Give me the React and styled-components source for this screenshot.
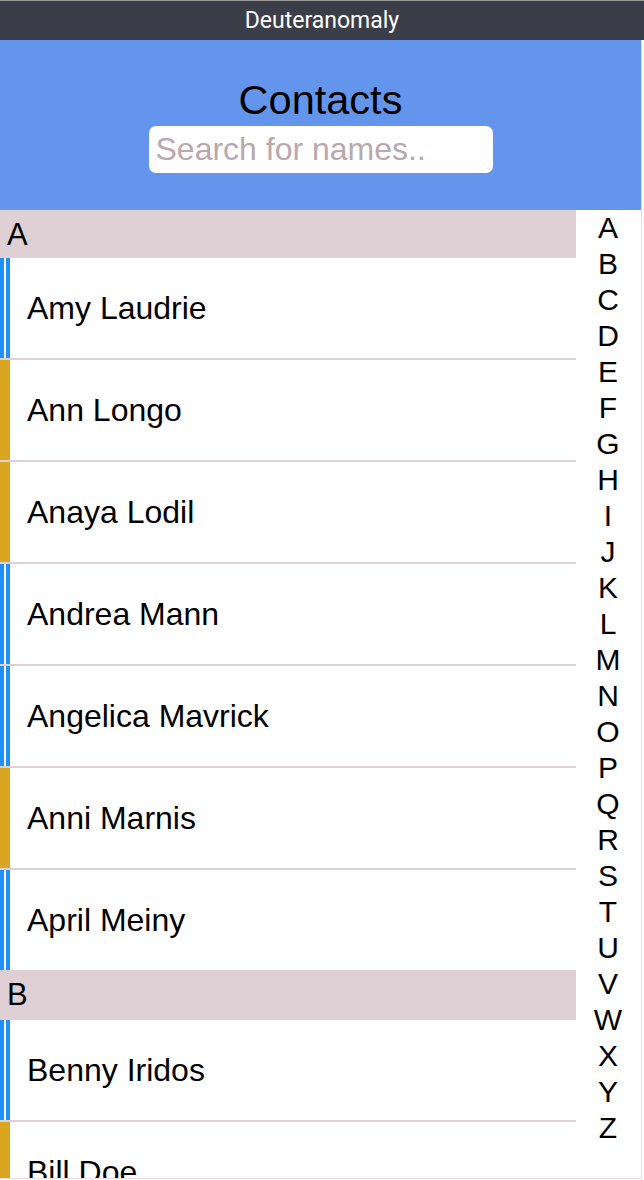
import React from 'react';
import styled, { createGlobalStyle } from 'styled-components';

const GlobalStyle = createGlobalStyle`
  body {
    margin: 0;
    background: #fff;
    font-family: "Liberation Sans", Arial, sans-serif;
  }
`;

const Page = styled.div`
  width: 644px;
  height: 1180px;
  display: flex;
  flex-direction: column;
  overflow: hidden;
`;

const TitleBar = styled.div`
  height: 39px;
  border-top: 1px solid #9c9c9c;
  background: #3b3e48;
  color: #fff;
  font-family: Roboto, "Noto Sans", sans-serif;
  font-size: 23px;
  display: flex;
  align-items: center;
  justify-content: center;
`;

const Shell = styled.div`
  box-sizing: border-box;
  width: 642px;
  height: 1139px;
  border-right: 1px solid #eddde3;
  border-bottom: 1px solid #eddde3;
  display: flex;
  flex-direction: column;
  overflow: hidden;
`;

const Header = styled.header`
  height: 170px;
  flex-shrink: 0;
  background: #6495ed;
  display: flex;
  flex-direction: column;
  align-items: center;
  padding-top: 38px;
  box-sizing: border-box;
`;

const Title = styled.h1`
  margin: 0;
  font-size: 41.5px;
  line-height: 44px;
  font-weight: normal;
  color: #000;
`;

const Search = styled.input`
  margin-top: 4px;
  box-sizing: border-box;
  width: 344px;
  height: 47px;
  border: none;
  border-radius: 7px;
  padding: 0 7px;
  font-family: "Liberation Sans", Arial, sans-serif;
  font-size: 32px;
  outline: none;
  &::placeholder {
    color: #b9a8ae;
  }
`;

const Body = styled.div`
  flex: 1;
  display: flex;
  min-height: 0;
`;

const List = styled.div`
  width: 576px;
  overflow: hidden;
`;

const SectionHead = styled.div`
  height: ${p => p.$height}px;
  box-sizing: border-box;
  padding: 7px 0 0 7px;
  background: #dfd0d5;
  font-size: 31px;
  color: #000;
`;

const Row = styled.div`
  height: 100px;
  display: flex;
  align-items: center;
  border-bottom: ${p => (p.$last ? 'none' : '2px solid #dfd0d5')};
`;

const Stripe = styled.div`
  width: 10px;
  align-self: stretch;
  flex-shrink: 0;
  background: ${p => (p.$kind === 'gold'
    ? '#daa520'
    : 'linear-gradient(to right, #1e90ff 0 4px, #fff 4px 6px, #1e90ff 6px 10px)')};
`;

const Name = styled.span`
  margin-left: 17px;
  font-size: 32px;
  color: #000;
`;

const Index = styled.div`
  width: 64px;
  display: flex;
  flex-direction: column;
  align-items: center;
  font-size: 30px;
  line-height: 36px;
  color: #000;
`;

const sections = [
  {
    letter: 'A',
    height: 48,
    people: [
      ['Amy Laudrie', 'blue'],
      ['Ann Longo', 'gold'],
      ['Anaya Lodil', 'gold'],
      ['Andrea Mann', 'blue'],
      ['Angelica Mavrick', 'blue'],
      ['Anni Marnis', 'gold'],
      ['April Meiny', 'blue'],
    ],
  },
  {
    letter: 'B',
    height: 50,
    people: [
      ['Benny Iridos', 'blue'],
      ['Bill Doe', 'gold'],
    ],
  },
];

const letters = 'ABCDEFGHIJKLMNOPQRSTUVWXYZ'.split('');

const App = () => {
  return (
    <Page>
      <GlobalStyle />
      <TitleBar>Deuteranomaly</TitleBar>
      <Shell>
        <Header>
          <Title>Contacts</Title>
          <Search placeholder="Search for names.." />
        </Header>
        <Body>
          <List>
            {sections.map(s => (
              <div key={s.letter}>
                <SectionHead $height={s.height}>{s.letter}</SectionHead>
                {s.people.map(([name, kind], i) => (
                  <Row key={name} $last={i === s.people.length - 1 && s.letter === 'A'}>
                    <Stripe $kind={kind} />
                    <Name>{name}</Name>
                  </Row>
                ))}
              </div>
            ))}
          </List>
          <Index>
            {letters.map(l => (
              <span key={l}>{l}</span>
            ))}
          </Index>
        </Body>
      </Shell>
    </Page>
  );
};

export default App;
